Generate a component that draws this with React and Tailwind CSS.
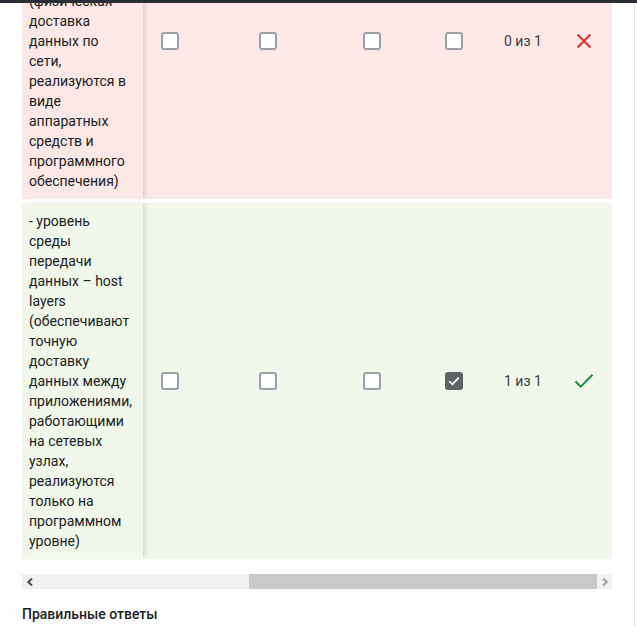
import React from "react";

function Box({ checked }) {
  if (checked) {
    return (
      <div className="w-[18px] h-[18px] rounded-[3px] bg-[#5f6368] flex items-center justify-center">
        <svg width="12" height="10" viewBox="0 0 12 10" fill="none">
          <path d="M1.2 5.2l3.2 3.1L10.8 1.6" stroke="white" strokeWidth="1.8" />
        </svg>
      </div>
    );
  }
  return <div className="w-[18px] h-[18px] rounded-[3px] border-2 border-[#9aa0a6] bg-white" />;
}

function Row({ text, bg, marks, score, ok }) {
  return (
    <div className={"flex items-center " + bg}>
      <div className={"self-stretch w-[121px] shrink-0 pl-[7px] pr-[9.5px] py-2 relative z-10 shadow-[3px_0_4px_-1px_rgba(0,0,0,0.12)] " + bg}>
        {text}
      </div>
      <div className="ml-[18px]"><Box checked={marks[0]} /></div>
      <div className="ml-[80px]"><Box checked={marks[1]} /></div>
      <div className="ml-[86px]"><Box checked={marks[2]} /></div>
      <div className="ml-[64px]"><Box checked={marks[3]} /></div>
      <div className="ml-[41px] w-[40px] text-[#3c4043] whitespace-nowrap">{score}</div>
      <div className="ml-[28px] w-[24px] flex justify-center">
        {ok ? (
          <svg width="20" height="16" viewBox="0 0 20 16" fill="none">
            <path d="M1.5 8.5l5.3 5.2L18.5 1.8" stroke="#1e8e3e" strokeWidth="2" />
          </svg>
        ) : (
          <svg width="16" height="16" viewBox="0 0 16 16" fill="none">
            <path d="M1.5 1.5l13 13M14.5 1.5l-13 13" stroke="#d93025" strokeWidth="2" />
          </svg>
        )}
      </div>
    </div>
  );
}

export default function App() {
  return (
    <div
      className="h-screen overflow-hidden bg-white text-[14px] leading-5 text-[#202124] flex flex-col"
      style={{ fontFamily: "Roboto, 'Liberation Sans', sans-serif" }}
    >
      <div className="h-[3px] bg-[#2b2f35] shrink-0" />
      <div className="flex flex-1 min-h-0">
        <div className="flex-1 pl-[22px] pr-[22px] overflow-hidden">
          <div className="-mt-[120px] flex flex-col gap-1">
            <Row
              bg="bg-[#fce8e6]"
              text="- уровень сетевой передачи данных – network layers (физическая доставка данных по сети, реализуются в виде аппаратных средств и программного обеспечения)"
              marks={[false, false, false, false]}
              score="0 из 1"
              ok={false}
            />
            <Row
              bg="bg-[#f1f7ea]"
              text="- уровень среды передачи данных – host layers (обеспечивают точную доставку данных между приложениями, работающими на сетевых узлах, реализуются только на программном уровне)"
              marks={[false, false, false, true]}
              score="1 из 1"
              ok={true}
            />
          </div>

          <div className="mt-[15px] h-[15px] flex bg-[#f1f1f1]">
            <div className="w-[15px] flex items-center justify-center">
              <svg width="6" height="8" viewBox="0 0 6 8"><path d="M5 0.5L1.2 4 5 7.5" stroke="#505050" strokeWidth="2" fill="none" /></svg>
            </div>
            <div className="w-[212px]" />
            <div className="flex-1 bg-[#c9c9c9]" />
            <div className="w-[15px] flex items-center justify-center">
              <svg width="6" height="8" viewBox="0 0 6 8"><path d="M1 0.5L4.8 4 1 7.5" stroke="#a3a3a3" strokeWidth="2" fill="none" /></svg>
            </div>
          </div>

          <div className="mt-[15px] font-medium">Правильные ответы</div>
        </div>
        <div className="w-[3px] border-l border-[#e3e3e3] shrink-0" />
      </div>
    </div>
  );
}
